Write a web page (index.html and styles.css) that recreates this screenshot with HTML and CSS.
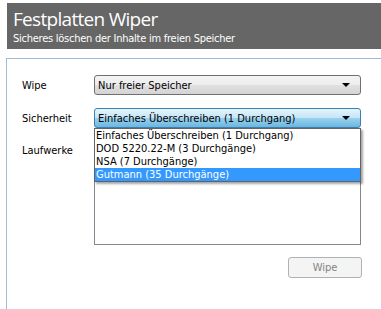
FILE: index.html
```html
<!DOCTYPE html>
<html lang="de">
<head>
    <meta charset="UTF-8">
    <title>Festplatten Wiper</title>
    <link rel="stylesheet" href="styles.css">
</head>
<body>
    <div class="header">
        <h1>Festplatten Wiper</h1>
        <p>Sicheres löschen der Inhalte im freien Speicher</p>
    </div>

    <div class="panel">
        <div class="row">
            <label>Wipe</label>
            <div class="combo">
                <span>Nur freier Speicher</span>
                <span class="arrow"></span>
            </div>
        </div>

        <div class="row">
            <label>Sicherheit</label>
            <div class="combo-wrap">
                <div class="combo open">
                    <span>Einfaches Überschreiben (1 Durchgang)</span>
                    <span class="arrow"></span>
                </div>
                <ul class="dropdown">
                    <li>Einfaches Überschreiben (1 Durchgang)</li>
                    <li>DOD 5220.22-M (3 Durchgänge)</li>
                    <li>NSA (7 Durchgänge)</li>
                    <li class="selected">Gutmann (35 Durchgänge)</li>
                </ul>
            </div>
        </div>

        <div class="row top">
            <label>Laufwerke</label>
            <div class="listbox"></div>
        </div>

        <div class="actions">
            <button disabled>Wipe</button>
        </div>
    </div>
</body>
</html>
```

FILE: styles.css
```css
body {
    margin: 0;
    background: #fff;
    font-family: "DejaVu Sans", Tahoma, sans-serif;
    font-stretch: condensed;
    font-size: 11px;
    color: #000;
}
.header {
    margin: 3px 0 0 7px;
    height: 46px;
    background: #666666;
    color: #fff;
    padding-left: 6px;
    box-sizing: border-box;
    padding-top: 4px;
}
.header h1 {
    margin: 0;
    font-family: "Open Sans", sans-serif;
    font-stretch: normal;
    font-weight: normal;
    font-size: 19px;
    letter-spacing: -0.7px;
    line-height: 24px;
}
.header p {
    margin: 0;
    line-height: 16px;
    letter-spacing: -0.25px;
}
.panel {
    margin: 9px 0 0 6px;
    border-top: 1px solid #9cbcd9;
    border-left: 1px solid #9cbcd9;
    padding: 16px 19px 40px 15px;
}
.row {
    display: flex;
    align-items: center;
    margin-bottom: 13px;
}
.row.top {
    align-items: flex-start;
    margin-bottom: 12px;
}
.row label {
    width: 72px;
}
.row.top label {
    padding-top: 3px;
}
.combo, .combo-wrap {
    width: 267px;
}
.combo-wrap {
    position: relative;
}
.combo {
    box-sizing: border-box;
    height: 20px;
    display: flex;
    align-items: center;
    justify-content: space-between;
    padding: 0 10px 0 3px;
    border: 1px solid #707070;
    border-radius: 3px;
    background: linear-gradient(#f4f4f4 0%, #ededed 50%, #e0e0e0 51%, #d4d4d4 100%);
}
.combo.open {
    border-color: #3c7fb1;
    background: linear-gradient(#e5f4fc 0%, #c4e5f6 50%, #98d1ef 51%, #6cb6de 100%);
}
.arrow {
    width: 0;
    height: 0;
    border-left: 4px solid transparent;
    border-right: 4px solid transparent;
    border-top: 4px solid #000;
}
.dropdown {
    position: absolute;
    top: 20px;
    left: 0;
    right: 0;
    margin: 0;
    padding: 0;
    list-style: none;
    background: #fff;
    border: 1px solid #646464;
    box-shadow: 2px 2px 2px rgba(0, 0, 0, 0.35);
    z-index: 2;
}
.dropdown li {
    height: 13px;
    line-height: 13px;
    padding-left: 1px;
}
.dropdown li.selected {
    background: #3399ff;
    color: #fff;
}
.listbox {
    box-sizing: border-box;
    width: 267px;
    height: 104px;
    border: 1px solid #828790;
    background: #fff;
}
.actions {
    display: flex;
    justify-content: flex-end;
}
.actions button {
    width: 74px;
    height: 21px;
    font-family: "DejaVu Sans", Tahoma, sans-serif;
    font-stretch: condensed;
    font-size: 11px;
    color: #838383;
    background: #f4f4f4;
    border: 1px solid #adb2b5;
    border-radius: 3px;
}
```
